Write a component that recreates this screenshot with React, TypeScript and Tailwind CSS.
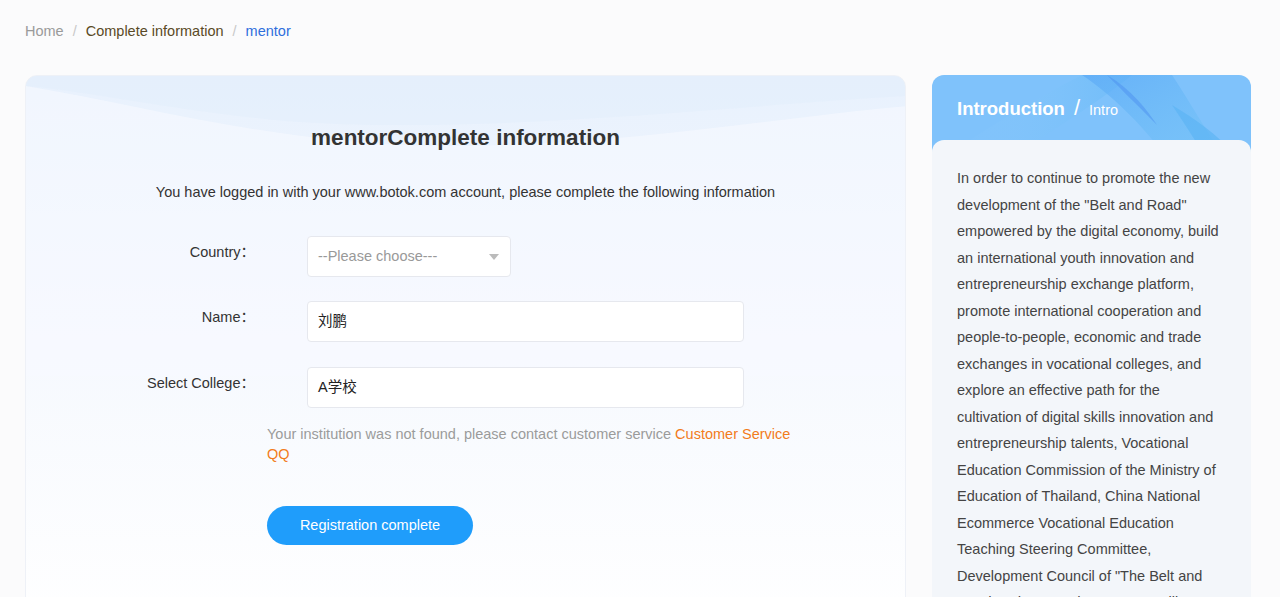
import React from "react";

const font = {
  fontFamily: '"Liberation Sans", Arial, "Noto Sans CJK SC", sans-serif',
};

const introText =
  'In order to continue to promote the new development of the "Belt and Road" empowered by the digital economy, build an international youth innovation and entrepreneurship exchange platform, promote international cooperation and people-to-people, economic and trade exchanges in vocational colleges, and explore an effective path for the cultivation of digital skills innovation and entrepreneurship talents, Vocational Education Commission of the Ministry of Education of Thailand, China National Ecommerce Vocational Education Teaching Steering Committee, Development Council of "The Belt and Road" Industry and Commerce Alliance jointly organize the competition.';

function Breadcrumb() {
  return (
    <div className="flex items-center h-[63px] pl-[25px] text-[14.5px]">
      <span className="text-[#9a9a9a]">Home</span>
      <span className="mx-[9px] text-[#c8c8c8]">/</span>
      <span className="text-[#5a4a26]">Complete information</span>
      <span className="mx-[9px] text-[#c8c8c8]">/</span>
      <span className="text-[#2f6fdc]">mentor</span>
    </div>
  );
}

function FormRow({ label, children }: { label: string; children: React.ReactNode }) {
  return (
    <div className="flex">
      <div className="w-[229px] pt-[5px] text-right text-[14.5px] leading-[20px] text-[#333]">
        {label}
        <span style={{ fontFamily: '"Noto Sans CJK SC", sans-serif' }}>：</span>
      </div>
      <div className="ml-[52px]">{children}</div>
    </div>
  );
}

function MainCard() {
  return (
    <div className="relative w-[881px] h-[560px] rounded-[12px] border border-[#eef1f7] overflow-hidden bg-gradient-to-b from-[#e8f1fd] via-[#f6f9fe] to-white">
      <svg
        className="absolute inset-0 pointer-events-none"
        width="881"
        height="300"
        viewBox="0 0 881 300"
        preserveAspectRatio="none"
      >
        <path d="M0 0 L881 0 L881 20 C700 30 450 60 260 45 C150 35 60 15 0 10 Z" fill="#e3eefc" opacity="0.6" />
        <path d="M0 10 C120 30 260 70 420 70 C600 70 760 40 881 30 L881 300 L0 300 Z" fill="#f7faff" opacity="0.55" />
      </svg>
      <div className="relative pt-[47px]">
        <h1 className="text-center text-[22.5px] leading-[30px] font-bold text-[#333]">
          mentorComplete information
        </h1>
        <p className="mt-[29px] text-center text-[14.5px] leading-[20px] text-[#333]">
          You have logged in with your www.botok.com account, please complete the following information
        </p>
        <div className="mt-[34px] flex flex-col gap-[24px]">
          <FormRow label="Country">
            <div className="w-[204px] h-[41px] rounded-[4px] border border-[#e6e8ee] bg-white flex items-center justify-between pl-[10px] pr-[11px]">
              <span className="text-[14.5px] text-[#999]">--Please choose---</span>
              <span className="w-0 h-0 border-l-[5px] border-r-[5px] border-t-[6px] border-l-transparent border-r-transparent border-t-[#bbb]" />
            </div>
          </FormRow>
          <FormRow label="Name">
            <div className="w-[437px] h-[41px] rounded-[4px] border border-[#e6e8ee] bg-white flex items-center pl-[10px] text-[14.5px] text-[#222]">
              刘鹏
            </div>
          </FormRow>
          <div className="mt-[1px]">
            <FormRow label="Select College">
              <div className="w-[437px] h-[41px] rounded-[4px] border border-[#e6e8ee] bg-white flex items-center pl-[10px] text-[14.5px] text-[#222]">
                A学校
              </div>
            </FormRow>
          </div>
        </div>
        <p className="mt-[16px] ml-[241px] w-[528px] text-[14.5px] leading-[20px] text-[#9b9b9b]">
          Your institution was not found, please contact customer service{" "}
          <span className="text-[#f27c1c]">Customer Service QQ</span>
        </p>
        <button className="mt-[42px] ml-[241px] w-[206px] h-[39px] rounded-full bg-[#1f9dfb] text-white text-[14.5px]">
          Registration complete
        </button>
      </div>
    </div>
  );
}

function IntroCard() {
  return (
    <div className="w-[319px] h-[560px] rounded-[12px] overflow-hidden bg-[#f3f6fa] flex flex-col">
      <div className="relative shrink-0 h-[77px] bg-[#7fc2fb] overflow-hidden">
        <svg className="absolute inset-0" width="319" height="77" viewBox="0 0 319 77">
          <defs>
            <linearGradient id="sw1" x1="0" y1="0" x2="1" y2="1">
              <stop offset="0" stopColor="#5aa8f7" stopOpacity="0.9" />
              <stop offset="1" stopColor="#6cc4f4" stopOpacity="0.4" />
            </linearGradient>
            <linearGradient id="sw2" x1="0" y1="0" x2="1" y2="0">
              <stop offset="0" stopColor="#9fd3fb" stopOpacity="0" />
              <stop offset="1" stopColor="#5fb6f6" stopOpacity="0.8" />
            </linearGradient>
          </defs>
          <path d="M20 77 C60 50 110 20 150 0 L200 0 C170 25 120 55 90 77 Z" fill="url(#sw2)" opacity="0.6" />
          <path d="M150 0 L240 0 C260 30 270 50 290 77 L230 77 C210 50 180 20 150 0 Z" fill="url(#sw1)" opacity="0.75" />
          <path d="M175 0 C200 15 215 35 225 50 C205 30 190 15 175 0 Z" fill="#4b8ff0" opacity="0.5" />
          <path d="M240 30 C265 45 285 60 300 77 L270 77 C260 60 250 45 240 30 Z" fill="#58b3f3" opacity="0.6" />
        </svg>
        <div className="relative flex items-baseline pl-[25px] pt-[20px] text-white">
          <span className="text-[18.5px] font-bold leading-[26px]">Introduction</span>
          <span className="ml-[9px] text-[22px] font-light leading-[26px]">/</span>
          <span className="ml-[9px] text-[14.5px]">Intro</span>
        </div>
      </div>
      <div className="-mt-[12px] relative rounded-t-[12px] bg-[#f3f6fa] flex-1 pl-[25px] pr-[24px] pt-[25px]">
        <p className="text-[14.5px] leading-[26.5px] text-[#444]">{introText}</p>
      </div>
    </div>
  );
}

export default function App() {
  return (
    <div className="min-h-[597px] bg-[#fbfbfc]" style={font}>
      <Breadcrumb />
      <div className="mt-[12px] pl-[25px] flex gap-[26px]">
        <MainCard />
        <IntroCard />
      </div>
    </div>
  );
}
